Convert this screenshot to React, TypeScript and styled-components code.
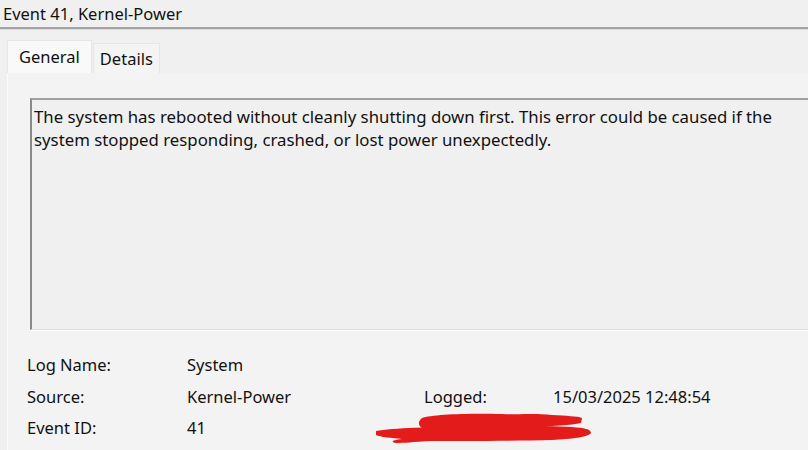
import React from 'react';
import styled, { createGlobalStyle } from 'styled-components';

const GlobalStyle = createGlobalStyle`
  html, body {
    margin: 0;
    padding: 0;
    background: #f0f0f0;
    overflow: hidden;
  }
`;

const Window = styled.div`
  width: 808px;
  height: 450px;
  overflow: hidden;
  background: #f0f0f0;
  font-family: "Noto Sans", "Open Sans", sans-serif;
  font-size: 16.5px;
  color: #111;
  display: flex;
  flex-direction: column;
`;

const TitleBar = styled.div`
  height: 27px;
  padding-left: 3px;
  display: flex;
  align-items: center;
  border-bottom: 2px solid #a3a3a3;
  box-shadow: 0 1px 0 #dcdcdc;
`;

const Body = styled.div`
  flex: 1;
  padding: 11px 0 0 7px;
  display: flex;
  flex-direction: column;
`;

const TabStrip = styled.div`
  display: flex;
  align-items: flex-end;
  height: 33px;
`;

const Tab = styled.div<{ $active?: boolean }>`
  height: ${p => (p.$active ? 33 : 30)}px;
  padding: 0 ${p => (p.$active ? 11 : 6)}px;
  display: flex;
  align-items: ${p => (p.$active ? 'center' : 'flex-end')};
  padding-bottom: ${p => (p.$active ? 2 : 3)}px;
  box-sizing: border-box;
  background: ${p => (p.$active ? '#f9f9f9' : '#f4f4f4')};
  border: 1px solid #e6e6e6;
  border-bottom: none;
  margin-right: 1px;
`;

const Panel = styled.div`
  flex: 1;
  background: #f3f3f3;
  border-left: 1px solid #fcfcfc;
  padding: 25px 0 0 22px;
  display: flex;
  flex-direction: column;
  overflow: hidden;
`;

const MessageBox = styled.div`
  height: 232px;
  margin-right: -20px;
  box-sizing: border-box;
  border-top: 2px solid #a0a0a0;
  border-left: 2px solid #8a8a8a;
  border-bottom: 1px solid #dcdcdc;
  box-shadow: 0 1px 0 #ffffff;
  padding: 5px 2px;
  line-height: 23px;
  background: #f0f0f0;
`;

const MessageText = styled.p`
  margin: 0;
  max-width: 770px;
  font-size: 16.8px;
`;

const Fields = styled.div`
  margin-top: 19px;
  margin-left: -3px;
  display: grid;
  grid-template-columns: 160px 237px 129px 1fr;
  grid-auto-rows: 31.5px;
  align-items: center;
`;

const Label = styled.div`
  color: #111;
  position: relative;
`;

const Value = styled.div`
  color: #111;
`;

const Redaction = styled.svg`
  position: absolute;
  left: -52px;
  top: -18px;
  width: 222px;
  height: 34px;
`;

const RedactMark: React.FC = () => (
  <Redaction viewBox="0 0 222 34">
    <path
      d="M50 8 C60 4 100 3 130 4 C150 5 160 3 180 5 C195 6 205 6 210 8 L209 13 C200 15 190 15 180 16 L52 19 C45 16 46 11 50 8 Z"
      fill="#e41b1b"
    />
    <path
      d="M4 21 C20 18 60 17 100 16 C140 15 180 16 200 17 C212 18 219 19 219 23 C216 27 200 29 180 30 C140 31 90 31 60 31 C40 32 32 33 24 33 C18 32 20 30 30 29 C20 28 8 27 4 25 Z"
      fill="#e41b1b"
    />
  </Redaction>
);

const App: React.FC = () => (
  <>
    <GlobalStyle />
    <Window>
      <TitleBar>Event 41, Kernel-Power</TitleBar>
      <Body>
        <TabStrip>
          <Tab $active>General</Tab>
          <Tab>Details</Tab>
        </TabStrip>
        <Panel>
          <MessageBox>
            <MessageText>
              The system has rebooted without cleanly shutting down first. This error could be caused if the
              system stopped responding, crashed, or lost power unexpectedly.
            </MessageText>
          </MessageBox>
          <Fields>
            <Label>Log Name:</Label>
            <Value>System</Value>
            <div />
            <div />
            <Label>Source:</Label>
            <Value>Kernel-Power</Value>
            <Label>Logged:</Label>
            <Value>15/03/2025 12:48:54</Value>
            <Label>Event ID:</Label>
            <Value>41</Value>
            <Label>
              <RedactMark />
            </Label>
            <Value />
          </Fields>
        </Panel>
      </Body>
    </Window>
  </>
);

export default App;
